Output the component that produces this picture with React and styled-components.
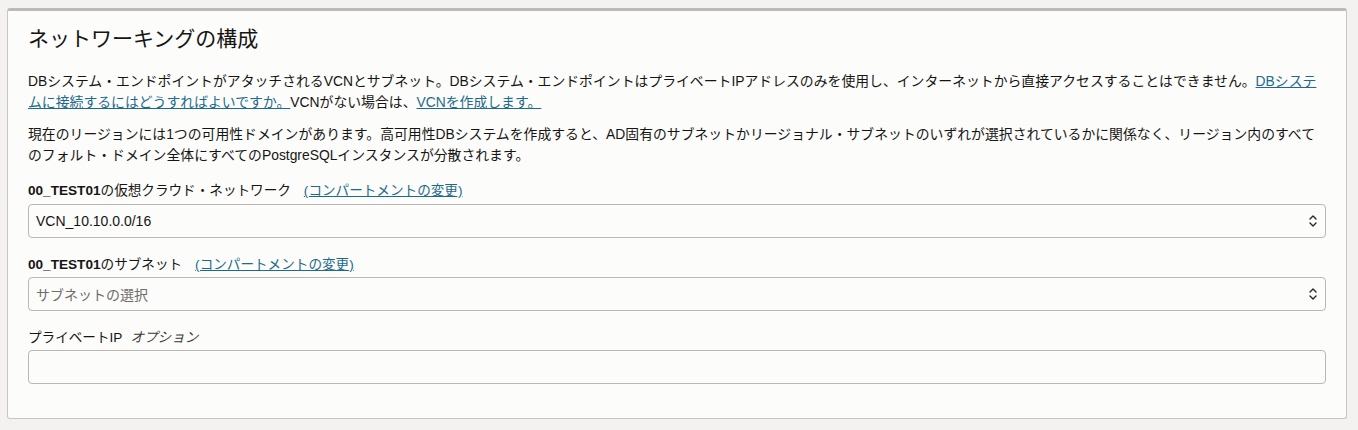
import React from "react";
import styled, { createGlobalStyle } from "styled-components";

const GlobalStyle = createGlobalStyle`
  html, body {
    margin: 0;
    padding: 0;
    background: #f3f2f1;
  }
  body {
    font-family: "Liberation Sans", "Noto Sans CJK JP", sans-serif;
    color: #161513;
  }
`;

const Page = styled.div`
  padding: 8px 11px 12px 7px;
`;

const Card = styled.section`
  background: #fcfcfb;
  border: 1px solid #c9c6c2;
  border-top: 3px solid #bdb9b4;
  border-radius: 3px;
  padding: 14px 20px 34px 20px;
`;

const Title = styled.h2`
  margin: 0 0 18px 0;
  font-size: 21px;
  line-height: 28px;
  font-weight: 400;
  color: #161513;
`;

const Para = styled.p`
  margin: 0 0 11px 0;
  font-size: 13.85px;
  line-height: 21px;
`;

const Link = styled.a`
  color: #1d6b8c;
  text-decoration: underline;
  cursor: pointer;
`;

const Field = styled.div`
  display: flex;
  flex-direction: column;
  gap: ${({ first }) => (first ? "3px" : "2px")};
  margin-top: ${({ first }) => (first ? "14px" : "16px")};
`;

const Label = styled.div`
  display: flex;
  align-items: baseline;
  font-size: 13.6px;
  line-height: 21px;
`;

const Strong = styled.b`
  font-weight: 700;
`;

const Aside = styled(Link)`
  margin-left: 13px;
`;

const Optional = styled.i`
  margin-left: 8px;
  color: #3c3a37;
`;

const Box = styled.div`
  height: 34px;
  box-sizing: border-box;
  border: 1px solid #bbb7b2;
  border-radius: 4px;
  background: #fcfcfb;
  display: flex;
  align-items: center;
  justify-content: space-between;
  padding: 0 7px 0 7px;
  font-size: 14px;
  color: ${({ placeholder }) => (placeholder ? "#6f6c69" : "#161513")};
`;

const Chevrons = () => (
  <svg width="10" height="14" viewBox="0 0 10 14" fill="none" stroke="#2a2826" strokeWidth="1.4" strokeLinecap="round" strokeLinejoin="round">
    <path d="M2 5 L5 2 L8 5" />
    <path d="M2 9 L5 12 L8 9" />
  </svg>
);

export default function App() {
  return (
    <Page>
      <GlobalStyle />
      <Card>
        <Title>ネットワーキングの構成</Title>
        <Para>
          DBシステム・エンドポイントがアタッチされるVCNとサブネット。DBシステム・エンドポイントはプライベートIPアドレスのみを使用し、インターネットから直接アクセスすることはできません。
          <Link>DBシステムに接続するにはどうすればよいですか。</Link>VCNがない場合は、<Link>VCNを作成します。</Link>
        </Para>
        <Para>
          現在のリージョンには1つの可用性ドメインがあります。高可用性DBシステムを作成すると、AD固有のサブネットかリージョナル・サブネットのいずれが選択されているかに関係なく、リージョン内のすべてのフォルト・ドメイン全体にすべてのPostgreSQLインスタンスが分散されます。
        </Para>
        <Field first>
          <Label>
            <Strong>00_TEST01</Strong>の仮想クラウド・ネットワーク
            <Aside>(コンパートメントの変更)</Aside>
          </Label>
          <Box>
            <span>VCN_10.10.0.0/16</span>
            <Chevrons />
          </Box>
        </Field>
        <Field>
          <Label>
            <Strong>00_TEST01</Strong>のサブネット
            <Aside>(コンパートメントの変更)</Aside>
          </Label>
          <Box placeholder>
            <span>サブネットの選択</span>
            <Chevrons />
          </Box>
        </Field>
        <Field>
          <Label>
            プライベートIP<Optional>オプション</Optional>
          </Label>
          <Box />
        </Field>
      </Card>
    </Page>
  );
}
